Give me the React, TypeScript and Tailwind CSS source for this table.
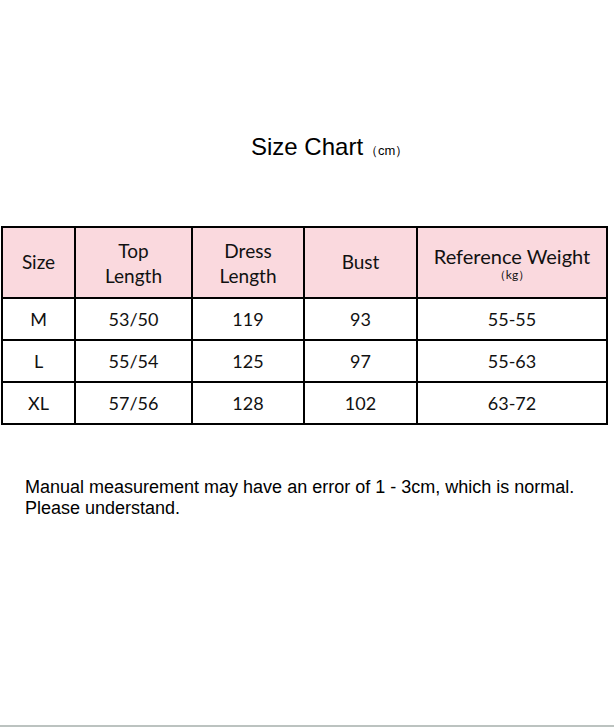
import React from 'react';

const rows = [
  { size: 'M', top: '53/50', dress: '119', bust: '93', weight: '55-55' },
  { size: 'L', top: '55/54', dress: '125', bust: '97', weight: '55-63' },
  { size: 'XL', top: '57/56', dress: '128', bust: '102', weight: '63-72' },
];

const cell = 'border-2 border-black text-center align-middle p-0';

export default function App() {
  return (
    <div className="w-[614px] h-[727px] bg-white flex flex-col border-b-2 border-[#bcc3c0]">
      <div className="pt-[132px] pl-[251px] flex items-baseline font-['Liberation_Sans',Arial,sans-serif] text-black">
        <span className="text-[24px] leading-[30px]">Size Chart</span>
        <span className="text-[13px] ml-[2px]">（cm）</span>
      </div>

      <table className="mt-[64px] ml-[1px] w-[607px] border-collapse table-fixed font-['Lato','Open_Sans',sans-serif] text-[#111] text-[18px]">
        <colgroup>
          <col className="w-[73px]" />
          <col className="w-[117px]" />
          <col className="w-[112px]" />
          <col className="w-[113px]" />
          <col />
        </colgroup>
        <thead>
          <tr className="h-[71px] bg-[#fad9de] text-[19px]">
            <th className={`${cell} font-normal`}>Size</th>
            <th className={`${cell} font-normal leading-[25px]`}>Top<br />Length</th>
            <th className={`${cell} font-normal leading-[25px]`}>Dress<br />Length</th>
            <th className={`${cell} font-normal`}>Bust</th>
            <th className={`${cell} font-normal leading-[24px] text-[20px]`}>
              Reference Weight
              <div className="text-[12px] leading-[14px]">（kg）</div>
            </th>
          </tr>
        </thead>
        <tbody>
          {rows.map((r) => (
            <tr key={r.size} className="h-[42px]">
              <td className={cell}>{r.size}</td>
              <td className={cell}>{r.top}</td>
              <td className={cell}>{r.dress}</td>
              <td className={cell}>{r.bust}</td>
              <td className={cell}>{r.weight}</td>
            </tr>
          ))}
        </tbody>
      </table>

      <p className="mt-[52px] pl-[25px] font-['Liberation_Sans',Arial,sans-serif] text-[18px] leading-[21px] text-black">
        Manual measurement may have an error of 1 - 3cm, which is normal.
        <br />
        Please understand.
      </p>
    </div>
  );
}
